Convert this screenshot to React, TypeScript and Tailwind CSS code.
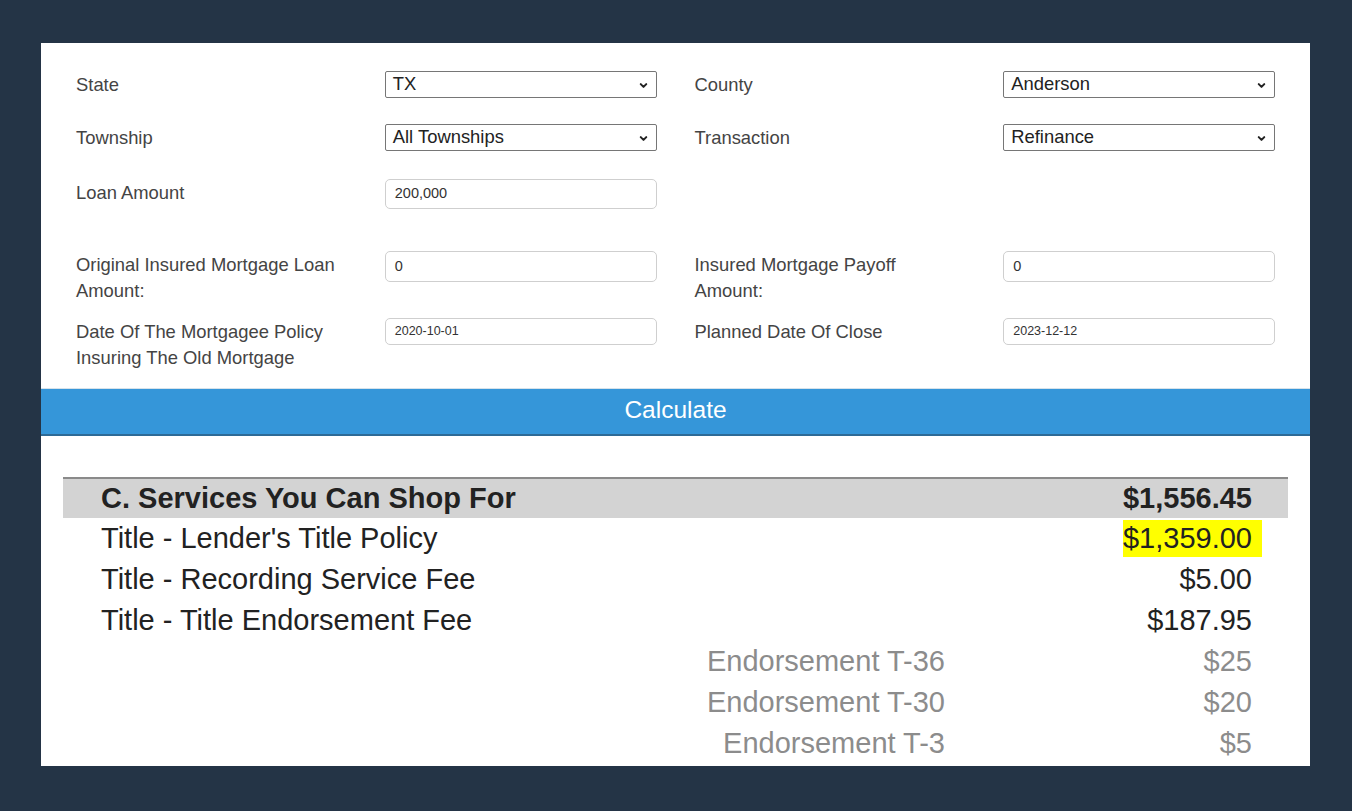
import { ChevronDown } from 'lucide-react';

const Select = ({ value }: { value: string }) => (
  <div className="relative h-[27px] w-[272px] rounded-[2px] border border-[#767676] bg-white">
    <div className="pl-[7px] text-[18.4px] leading-[24px] text-[#222]">{value}</div>
    <ChevronDown
      className="absolute right-[7px] top-[8px] h-[11px] w-[11px] text-[#222]"
      strokeWidth={4.5}
    />
  </div>
);

const Input = ({ value, h, small }: { value: string; h: string; small?: boolean }) => (
  <div
    className={`flex w-[272px] items-center rounded-[5px] border border-[#cfcfcf] bg-white pl-[9px] text-[#333] ${h} ${
      small ? 'text-[12.5px]' : 'text-[14.5px]'
    }`}
  >
    {value}
  </div>
);

const Label = ({ children }: { children: React.ReactNode }) => (
  <div className="w-[309px] pr-[36px] pt-[1px] text-[18.4px] leading-[26px] text-[#444]">{children}</div>
);

const Field = ({ label, children }: { label: React.ReactNode; children?: React.ReactNode }) => (
  <div className="flex items-start">
    <Label>{label}</Label>
    {children}
  </div>
);

const rows = [
  { label: "Title - Lender's Title Policy", amount: '$1,359.00', hl: true },
  { label: 'Title - Recording Service Fee', amount: '$5.00' },
  { label: 'Title - Title Endorsement Fee', amount: '$187.95' },
];

const endorsements = [
  { label: 'Endorsement T-36', amount: '$25' },
  { label: 'Endorsement T-30', amount: '$20' },
  { label: 'Endorsement T-3', amount: '$5' },
];

export default function App() {
  return (
    <div className="min-h-[811px] bg-[#243446] pl-[41px] pr-[42px] pt-[43px] font-['Liberation_Sans',Arimo,Arial,sans-serif]">
      <div className="h-[723px] bg-white">
        <div className="px-[35px] pb-[17px] pt-[28px]">
          <div className="grid grid-cols-2 gap-x-[38px]">
            <Field label="State">
              <Select value="TX" />
            </Field>
            <Field label="County">
              <Select value="Anderson" />
            </Field>
          </div>
          <div className="mt-[26px] grid grid-cols-2 gap-x-[38px]">
            <Field label="Township">
              <Select value="All Townships" />
            </Field>
            <Field label="Transaction">
              <Select value="Refinance" />
            </Field>
          </div>
          <div className="mt-[28px] grid grid-cols-2 gap-x-[38px]">
            <Field label="Loan Amount">
              <Input value="200,000" h="h-[30px]" />
            </Field>
          </div>
          <div className="mt-[42px] grid grid-cols-2 gap-x-[38px]">
            <Field label="Original Insured Mortgage Loan Amount:">
              <Input value="0" h="h-[31px]" />
            </Field>
            <Field label={<>Insured Mortgage Payoff<br />Amount:</>}>
              <Input value="0" h="h-[31px]" />
            </Field>
          </div>
          <div className="mt-[14px] grid grid-cols-2 gap-x-[38px]">
            <Field label="Date Of The Mortgagee Policy Insuring The Old Mortgage">
              <Input value="2020-10-01" h="h-[27px]" small />
            </Field>
            <Field label="Planned Date Of Close">
              <Input value="2023-12-12" h="h-[27px]" small />
            </Field>
          </div>
        </div>

        <button
          type="button"
          className="flex h-[48px] w-full items-center justify-center border-t border-b-2 border-t-[#d6e2ea] border-b-[#2d6a96] bg-[#3596d9] pb-[2px] text-[24.5px] text-white"
        >
          Calculate
        </button>

        <div className="px-[22px] pt-[41px]">
          <div className="flex h-[41px] items-center justify-between border-t-2 border-[#8a8a8a] bg-[#d3d3d3] pl-[38px] pr-[36px] text-[29px] font-bold text-[#222]">
            <span>C. Services You Can Shop For</span>
            <span>$1,556.45</span>
          </div>
          {rows.map((r) => (
            <div
              key={r.label}
              className="flex h-[41px] items-center justify-between pl-[38px] pr-[36px] text-[29px] text-[#222]"
            >
              <span>{r.label}</span>
              {r.hl ? (
                <span className="-mr-[10px] flex h-[37px] items-center bg-[#ffff00] pr-[10px]">{r.amount}</span>
              ) : (
                <span>{r.amount}</span>
              )}
            </div>
          ))}
          {endorsements.map((e) => (
            <div key={e.label} className="flex h-[41px] items-center pr-[36px] text-[29px] text-[#8c8c8c]">
              <span className="w-[882px] text-right">{e.label}</span>
              <span className="flex-1 text-right">{e.amount}</span>
            </div>
          ))}
        </div>
      </div>
    </div>
  );
}
